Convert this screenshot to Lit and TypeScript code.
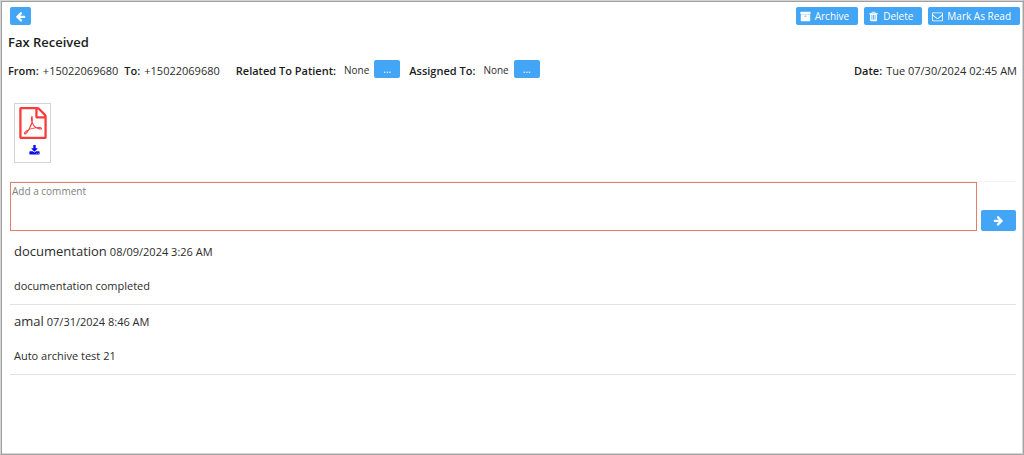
import { LitElement, html, css, svg } from "lit";
import { customElement, property } from "lit/decorators.js";

const ICONS: Record<string, { box: string; d: string }> = {
  back: {
    box: "0 0 1792 1792",
    d: "M1664 896v128q0 53-32.5 90.5t-84.5 37.5h-704l293 294q38 36 38 90t-38 90l-75 76q-37 37-90 37-52 0-91-37l-651-652q-37-37-37-90 0-52 37-91l651-650q38-38 91-38 52 0 90 38l75 74q38 38 38 91t-38 91l-293 293h704q52 0 84.5 37.5t32.5 90.5z",
  },
  forward: {
    box: "0 0 1792 1792",
    d: "M1600 960q0 54-37 91l-651 651q-39 37-91 37-51 0-90-37l-75-75q-38-38-38-91t38-91l293-293h-704q-52 0-84.5-37.5t-32.5-90.5v-128q0-53 32.5-90.5t84.5-37.5h704l-293-294q-38-36-38-90t38-90l75-75q38-38 90-38 53 0 91 38l651 651q37 35 37 90z",
  },
  archive: {
    box: "0 0 1792 1792",
    d: "M1088 832q0-26-19-45t-45-19h-256q-26 0-45 19t-19 45 19 45 45 19h256q26 0 45-19t19-45zm576-192v960q0 26-19 45t-45 19h-1408q-26 0-45-19t-19-45v-960q0-26 19-45t45-19h1408q26 0 45 19t19 45zm64-448v256q0 26-19 45t-45 19h-1536q-26 0-45-19t-19-45v-256q0-26 19-45t45-19h1536q26 0 45 19t19 45z",
  },
  trash: {
    box: "0 0 1792 1792",
    d: "M704 1376v-704q0-14-9-23t-23-9h-64q-14 0-23 9t-9 23v704q0 14 9 23t23 9h64q14 0 23-9t9-23zm256 0v-704q0-14-9-23t-23-9h-64q-14 0-23 9t-9 23v704q0 14 9 23t23 9h64q14 0 23-9t9-23zm256 0v-704q0-14-9-23t-23-9h-64q-14 0-23 9t-9 23v704q0 14 9 23t23 9h64q14 0 23-9t9-23zm-544-992h448l-48-117q-7-9-17-11h-317q-10 2-17 11zm928 32v64q0 14-9 23t-23 9h-96v948q0 83-47 143.5t-113 60.5h-832q-66 0-113-58.5t-47-141.5v-952h-96q-14 0-23-9t-9-23v-64q0-14 9-23t23-9h309l70-167q15-37 54-63t79-26h320q40 0 79 26t54 63l70 167h309q14 0 23 9t9 23z",
  },
  envelope: {
    box: "0 0 1792 1792",
    d: "M160 256h1472q66 0 113 47t47 113v1088q0 66-47 113t-113 47h-1472q-66 0-113-47t-47-113v-1088q0-66 47-113t113-47zM128 736v768q0 13 9.500 22.500t22.500 9.500h1472q13 0 22.500-9.500t9.500-22.500v-768q-32 36-69 66-268 206-426 338-51 43-83 67t-86.500 48.500-102.500 24.500h-2q-48 0-102.500-24.500t-86.500-48.500-83-67q-158-132-426-338-37-30-69-66zM160 384q-13 0-22.500 9.500t-9.500 22.500q0 168 147 284 193 152 401 317 6 5 35 29.500t46 37.500 44.500 31.500 50.500 27.500 43 9h2q20 0 43-9t50.500-27.500 44.500-31.500 46-37.500 35-29.500q208-165 401-317 54-43 100.500-115.500t46.500-131.500q0-69-32-69z",
  },
  download: {
    box: "0 0 1792 1792",
    d: "M1344 1344q0-26-19-45t-45-19-45 19-19 45 19 45 45 19 45-19 19-45zm256 0q0-26-19-45t-45-19-45 19-19 45 19 45 45 19 45-19 19-45zm128-224v320q0 40-28 68t-68 28h-1472q-40 0-68-28t-28-68v-320q0-40 28-68t68-28h465l135 136q58 56 136 56t136-56l136-136h464q40 0 68 28t28 68zm-325-569q17 41-14 70l-448 448q-18 19-45 19t-45-19l-448-448q-31-29-14-70 17-39 59-39h256v-448q0-26 19-45t45-19h256q26 0 45 19t19 45v448h256q42 0 59 39z",
  },
  pdf: {
    box: "128 0 1536 1792",
    d: "M1596 380q28 28 48 76t20 88v1152q0 40-28 68t-68 28h-1344q-40 0-68-28t-28-68v-1600q0-40 28-68t68-28h896q40 0 88 20t76 48zm-444-244v376h376q-10-29-22-41l-313-313q-12-12-41-22zm384 1528v-1024h-416q-40 0-68-28t-28-68v-416h-768v1536h1280zm-514-593q33 26 84 56 59-7 117-7 147 0 177 49 16 22 2 52 0 1-1 2l-2 2v1q-6 38-71 38-48 0-115-20t-130-53q-221 24-392 83-153 262-242 262-15 0-28-7l-24-12q-1-1-6-5-10-10-6-36 9-40 56-91.500t132-96.500q14-9 23 6 2 2 2 4 52-85 107-197 68-136 104-262-24-82-30.500-159.500t6.500-127.500q11-40 42-40h22q23 0 35 15 18 21 9 68-2 6-4 8 1 3 1 8v30q-2 123-14 192 55 164 146 238zm-576 411q52-24 137-158-51 40-87.500 84t-49.500 74zm398-920q-15 42-2 132 1-7 7-44 0-3 7-43 1-4 4-8-1-1-1-2t-1-2q-1-22-13-36 0 1-1 2v2zm-124 661q135-54 284-81-2-1-13-9.500t-16-13.500q-76-67-127-176-27 86-83 197-30 56-45 83zm646-16q-24-24-140-24 76 28 124 28 14 0 18-1 0-1-2-3z",
  },
};

@customElement("fax-icon")
class FaxIcon extends LitElement {
  @property() name = "back";

  static styles = css`
    :host {
      display: inline-flex;
      flex: none;
      width: 11px;
      height: 11px;
    }
    .glyph {
      width: 100%;
      height: 100%;
      fill: currentColor;
    }
  `;

  render() {
    const icon = ICONS[this.name];
    return html`<svg class="glyph" viewBox=${icon.box} aria-hidden="true">
      ${svg`<path fill-rule="evenodd" d=${icon.d}></path>`}
    </svg>`;
  }
}

interface Comment {
  author: string;
  time: string;
  text: string;
}

@customElement("app-root")
class AppRoot extends LitElement {
  comments: Comment[] = [
    { author: "documentation", time: "08/09/2024 3:26 AM", text: "documentation completed" },
    { author: "amal", time: "07/31/2024 8:46 AM", text: "Auto archive test 21" },
  ];

  static styles = css`
    :host {
      display: block;
      font-family: "Open Sans", "Noto Sans", sans-serif;
      font-size: 11px;
      line-height: 16px;
      color: #2c2c2c;
    }
    .page {
      box-sizing: border-box;
      min-height: 100vh;
      padding: 6px 7px 8px;
      border: 1px solid;
      border-color: #d4d4d4 #a4a4a4 #a4a4a4 #d4d4d4;
      box-shadow: inset 1px 1px #a0a0a0, inset -1px -1px #d4d4d4;
      background: #fff;
    }
    .toolbar {
      display: flex;
      justify-content: space-between;
      padding: 0 0 0 2px;
    }
    .actions {
      display: flex;
      gap: 6px;
      margin-right: -4px;
    }
    .btn {
      display: inline-flex;
      align-items: center;
      justify-content: center;
      gap: 4px;
      box-sizing: border-box;
      height: 18px;
      padding: 0 5px;
      border: 0;
      border-radius: 2px;
      background: #42a5f5;
      color: #fff;
      font: inherit;
      font-size: 10px;
      cursor: pointer;
    }
    .action {
      padding: 0 9px 0 4px;
    }
    .more {
      width: 26px;
      margin-left: 5px;
      align-self: flex-start;
    }
    .title {
      margin: 8px 0 0;
      font-size: 13px;
      line-height: 18px;
      font-weight: 600;
      color: #1c1c1c;
    }
    .meta {
      display: flex;
      align-items: center;
      margin-top: 9px;
      height: 22px;
    }
    .field {
      display: flex;
      align-items: center;
      gap: 4px;
      white-space: nowrap;
    }
    .label {
      font-weight: 600;
      color: #1c1c1c;
    }
    .from {
      margin-right: 6px;
    }
    .to {
      margin-right: 16px;
    }
    .assigned {
      margin-left: 9px;
    }
    .choice {
      font-size: 10px;
      padding: 0 0 2px 4px;
    }
    .date {
      margin-left: auto;
      margin-right: -1px;
    }
    .file {
      display: flex;
      flex-direction: column;
      align-items: center;
      gap: 6px;
      box-sizing: border-box;
      width: 37px;
      height: 60px;
      margin: 21px 0 0 6px;
      padding-top: 3px;
      border: 1px solid #d4d4d4;
      text-decoration: none;
    }
    .pdf {
      width: 28px;
      height: 32px;
      color: #fb3b3b;
    }
    .download {
      color: #0a0aee;
      margin-left: 4px;
    }
    .composer {
      display: flex;
      align-items: flex-end;
      gap: 4px;
      margin: 18px 0 0 2px;
      border-top: 1px solid #f3f3f3;
      border-bottom: 1px solid #fafafa;
    }
    .comment-box {
      flex: 1;
      display: block;
      box-sizing: border-box;
      height: 49px;
      padding: 0 1px;
      border: 1px solid #e57d6f;
      outline: 0;
      resize: none;
      font: inherit;
      font-size: 10px;
      color: #333;
    }
    .comment-box::placeholder {
      color: #808080;
    }
    .send {
      width: 35px;
      height: 21px;
    }
    .comments {
      list-style: none;
      margin: 3px 0 0 2px;
      padding: 0;
    }
    .comment {
      padding: 7px 4px 10px;
      border-bottom: 1px solid #e2e2e2;
    }
    .heading {
      display: flex;
      align-items: baseline;
      gap: 3px;
    }
    .author {
      font-size: 13px;
      line-height: 18px;
    }
    .text {
      margin: 18px 0 0;
    }
  `;

  render() {
    return html`
      <main class="page">
        <div class="toolbar">
          <button class="btn" aria-label="Back"><fax-icon name="back"></fax-icon></button>
          <div class="actions">
            <button class="btn action"><fax-icon name="archive"></fax-icon>Archive</button>
            <button class="btn action"><fax-icon name="trash"></fax-icon>Delete</button>
            <button class="btn action"><fax-icon name="envelope"></fax-icon>Mark As Read</button>
          </div>
        </div>
        <h1 class="title">Fax Received</h1>
        <div class="meta">
          <div class="field from"><span class="label">From:</span><span>+15022069680</span></div>
          <div class="field to"><span class="label">To:</span><span>+15022069680</span></div>
          <div class="field">
            <span class="label">Related To Patient:</span><span class="choice">None</span>
          </div>
          <button class="btn more" aria-label="Choose patient">...</button>
          <div class="field assigned">
            <span class="label">Assigned To:</span><span class="choice">None</span>
          </div>
          <button class="btn more" aria-label="Choose assignee">...</button>
          <div class="field date"><span class="label">Date:</span><span>Tue 07/30/2024 02:45 AM</span></div>
        </div>
        <a class="file" href="#" aria-label="Download PDF">
          <fax-icon class="pdf" name="pdf"></fax-icon>
          <fax-icon class="download" name="download"></fax-icon>
        </a>
        <form class="composer">
          <textarea class="comment-box" aria-label="Comment" placeholder="Add a comment"></textarea>
          <button class="btn send" type="button" aria-label="Send"><fax-icon name="forward"></fax-icon></button>
        </form>
        <ul class="comments">
          ${this.comments.map(
            (c) => html`<li class="comment">
              <div class="heading"><span class="author">${c.author}</span><time>${c.time}</time></div>
              <p class="text">${c.text}</p>
            </li>`
          )}
        </ul>
      </main>
    `;
  }
}
